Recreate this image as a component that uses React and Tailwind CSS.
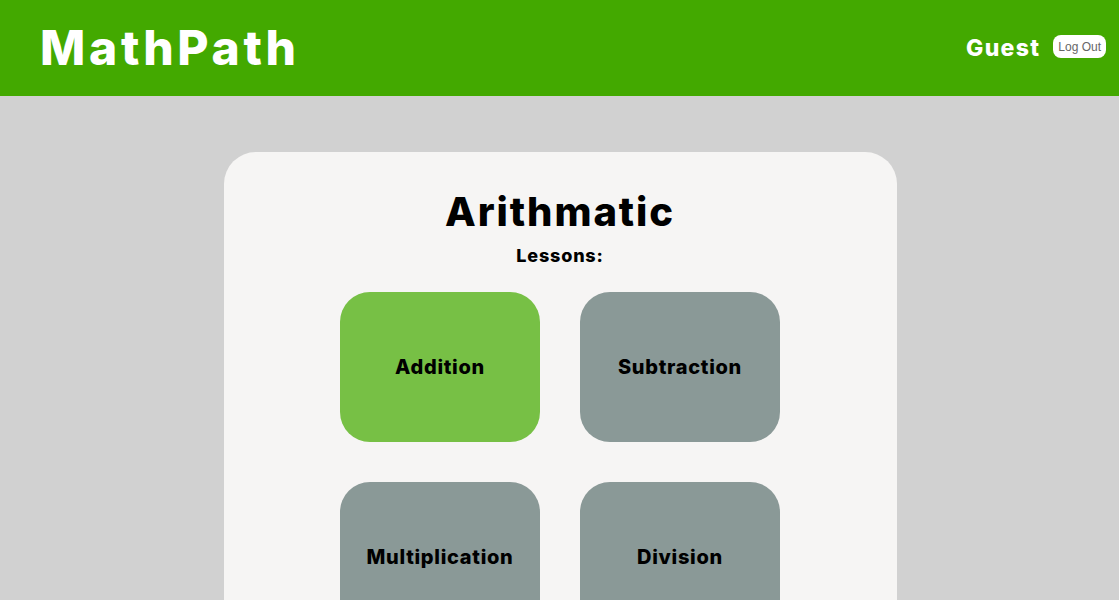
export default function App() {
  const tiles = [
    { name: "Addition", color: "bg-[#77c045]" },
    { name: "Subtraction", color: "bg-[#8a9997]" },
    { name: "Multiplication", color: "bg-[#8a9997]" },
    { name: "Division", color: "bg-[#8a9997]" },
  ];
  return (
    <div className="min-h-[600px] bg-[#d1d1d1] font-['Inter',sans-serif]">
      <header className="h-[96px] bg-[#43a900] flex items-center justify-between pl-[40px] pr-[13px]">
        <h1 className="text-white text-[48px] font-extrabold leading-none tracking-[3.7px]">MathPath</h1>
        <div className="flex items-center gap-[13px]">
          <span className="text-white text-[23px] font-extrabold tracking-[1.3px]">Guest</span>
          <button className="bg-white rounded-[8px] h-[23px] px-[5px] text-[12px] text-[#666] font-['Liberation_Sans',sans-serif] -mt-[3px]">
            Log Out
          </button>
        </div>
      </header>
      <main className="flex justify-center pt-[56px]">
        <div className="w-[673px] ml-[1px] bg-[#f6f5f4] rounded-t-[32px] flex flex-col items-center pt-[36px] pb-[40px] min-h-[460px]">
          <h2 className="text-[40px] font-extrabold leading-[48px] text-black tracking-[1.9px]">Arithmatic</h2>
          <p className="text-[18px] font-extrabold mt-[8px] leading-[24px] text-black tracking-[0.8px]">Lessons:</p>
          <div className="grid grid-cols-[200px_200px] gap-[40px] mt-[24px]">
            {tiles.map((t) => (
              <div
                key={t.name}
                className={`${t.color} w-[200px] h-[150px] rounded-[30px] flex items-center justify-center`}
              >
                <span className="text-[20px] font-extrabold text-black tracking-[0.7px]">{t.name}</span>
              </div>
            ))}
          </div>
        </div>
      </main>
    </div>
  );
}
